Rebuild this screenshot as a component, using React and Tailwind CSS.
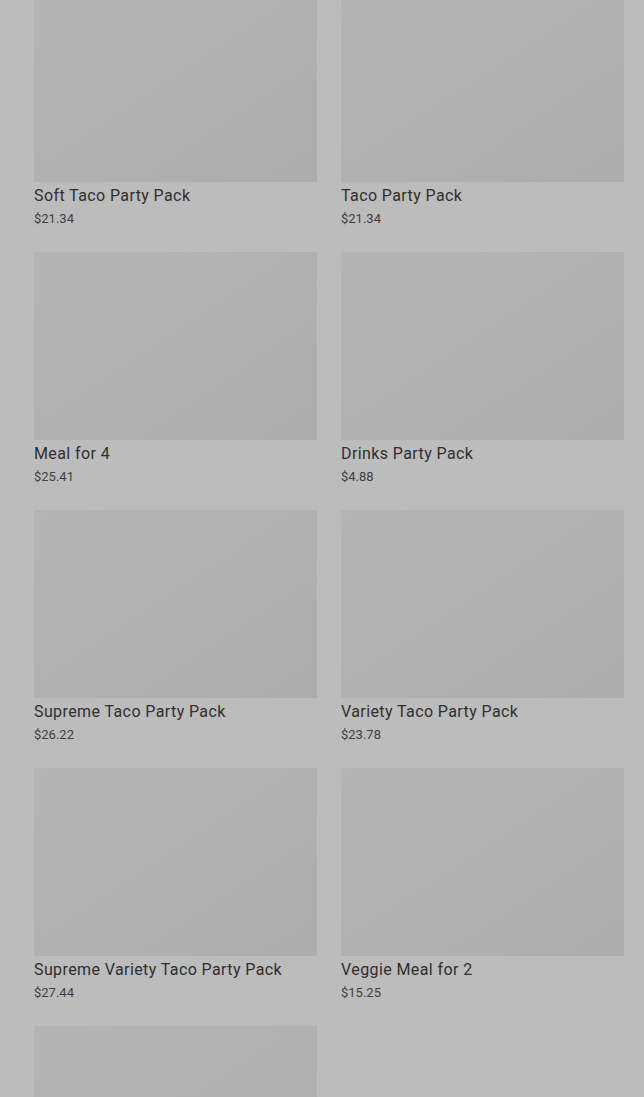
const items = [
  { name: "Soft Taco Party Pack", price: "$21.34" },
  { name: "Taco Party Pack", price: "$21.34" },
  { name: "Meal for 4", price: "$25.41" },
  { name: "Drinks Party Pack", price: "$4.88" },
  { name: "Supreme Taco Party Pack", price: "$26.22" },
  { name: "Variety Taco Party Pack", price: "$23.78" },
  { name: "Supreme Variety Taco Party Pack", price: "$27.44" },
  { name: "Veggie Meal for 2", price: "$15.25" },
  { name: "", price: "" },
];

function ProductCard({ name, price }) {
  return (
    <div className="flex flex-col">
      <div className="h-[188px] w-full bg-gradient-to-br from-[#b4b4b4] to-[#adadad]" />
      {name && (
        <div className="pt-[4px]">
          <div className="text-[16px] leading-[20px] font-normal tracking-[0.4px] text-[#2f2f2f]">{name}</div>
          <div className="mt-[5px] text-[13px] leading-[16px] text-[#3f3f3f]">{price}</div>
        </div>
      )}
    </div>
  );
}

export default function App() {
  return (
    <div
      className="min-h-[1097px] overflow-hidden bg-[#bcbcbc]"
      style={{ fontFamily: "Roboto, 'Liberation Sans', sans-serif" }}
    >
      <div className="-mt-[6px] grid grid-cols-2 gap-x-[24px] gap-y-[70px] pl-[34px] pr-[20px]">
        {items.map((item, i) => (
          <div key={i} className="h-[188px]">
            <ProductCard {...item} />
          </div>
        ))}
      </div>
    </div>
  );
}
